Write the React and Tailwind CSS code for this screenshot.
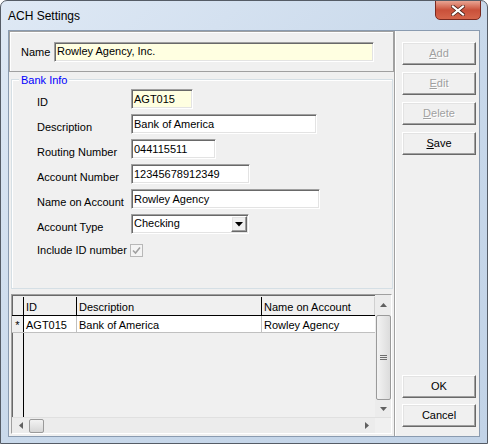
import React from 'react';

const sunken =
  'border border-t-[#a0a0a0] border-l-[#a0a0a0] border-r-white border-b-white shadow-[inset_1px_1px_0_#696969,inset_-1px_-1px_0_#e3e3e3]';
const raised =
  'border border-t-white border-l-white border-r-[#696969] border-b-[#696969] shadow-[inset_-1px_-1px_0_#a0a0a0,inset_1px_1px_0_#e3e3e3]';

function Field({ width, value, yellow }) {
  return (
    <div
      className={`${sunken} h-[20px] shrink-0 ${width} ${yellow ? 'bg-[#ffffe1]' : 'bg-white'} flex items-center pl-[2px] text-[11px] leading-none text-black`}
    >
      {value}
    </div>
  );
}

function Row({ label, children }) {
  return (
    <div className="flex items-center h-[20px]">
      <div className="w-[119px] shrink-0 pl-[25px] pt-[6px] text-[11px] text-black whitespace-nowrap">{label}</div>
      {children}
    </div>
  );
}

function Btn({ children, disabled }) {
  return (
    <div
      className={`${raised} bg-[#f0f0f0] h-[23px] w-[74px] flex items-center justify-center text-[11px] ${
        disabled ? 'text-[#a0a0a0] [text-shadow:1px_1px_0_#fff]' : 'text-black'
      }`}
    >
      {children}
    </div>
  );
}

export default function App() {
  return (
    <div
      className="relative w-[488px] h-[444px] overflow-hidden rounded-t-[7px] border border-[#555c66] bg-gradient-to-br from-[#dfe9f5] via-[#c9d9eb] to-[#c2d3e7]"
      style={{ fontFamily: '"Liberation Sans", Arial, sans-serif' }}
    >
      {/* title bar */}
      <div className="h-[29px] flex items-center pl-[7px] text-[12px] text-black">ACH Settings</div>
      <div className="absolute top-[-1px] right-[6px] w-[46px] h-[20px] rounded-b-[5px] border border-[#7a2a20] bg-gradient-to-b from-[#e8a493] via-[#c9503a] to-[#d5654b] flex items-center justify-center">
        <svg width="14" height="11" viewBox="0 0 14 11">
          <path d="M2 1.5 L12 9.5 M12 1.5 L2 9.5" stroke="#4a2018" strokeWidth="3.6" strokeLinecap="square" />
          <path d="M2 1.5 L12 9.5 M12 1.5 L2 9.5" stroke="#ffffff" strokeWidth="2.2" strokeLinecap="square" />
        </svg>
      </div>

      {/* client */}
      <div className="mx-[7px] h-[407px] border border-[#8a9bb0] bg-[#f0f0f0] flex">
        {/* left pane */}
        <div className="w-[385px] flex flex-col">
          <div className="h-[41px] border border-[#a0a0a0] shadow-[inset_1px_1px_0_#fff] flex items-center">
            <div className="pl-[11px] w-[44px] shrink-0 pt-[2px] text-[11px]">Name</div>
            <Field width="w-[320px]" value="Rowley Agency, Inc." yellow />
          </div>

          {/* Bank Info group */}
          <div className="relative mt-[7px] ml-[2px] mr-[1px] h-[210px] border border-[#d5dfe5] shadow-[inset_1px_1px_0_#fff]">
            <div className="absolute -top-[8px] left-[7px] px-[2px] bg-[#f0f0f0] text-[11px] text-[#0000ff]">Bank Info</div>
            <div className="flex flex-col gap-[5px] pt-[9px]">
              <Row label="ID">
                <Field width="w-[62px]" value="AGT015" yellow />
              </Row>
              <Row label="Description">
                <Field width="w-[186px]" value="Bank of America" />
              </Row>
              <Row label="Routing Number">
                <Field width="w-[85px]" value="044115511" />
              </Row>
              <Row label="Account Number">
                <Field width="w-[119px]" value="12345678912349" />
              </Row>
              <Row label="Name on Account">
                <Field width="w-[189px]" value="Rowley Agency" />
              </Row>
              <Row label="Account Type">
                <div className={`${sunken} h-[20px] w-[118px] shrink-0 bg-white flex items-center text-[11px]`}>
                  <div className="flex-1 pl-[2px] pb-[2px]">Checking</div>
                  <div className={`${raised} bg-[#f0f0f0] w-[16px] h-[16px] mr-[1px] flex items-center justify-center`}>
                    <svg width="8" height="5" viewBox="0 0 8 5">
                      <path d="M0 0 H8 L4 4.5 Z" fill="#000" />
                    </svg>
                  </div>
                </div>
              </Row>
              <div className="flex items-center h-[20px] mt-[1px]">
                <div className="w-[118px] shrink-0 pl-[25px] text-[11px] whitespace-nowrap">Include ID number</div>
                <div className="w-[13px] h-[13px] border border-[#b8b8b8] bg-[#f4f4f4] flex items-center justify-center">
                  <svg width="9" height="9" viewBox="0 0 9 9">
                    <path d="M1 4.5 L3.5 7 L8 1.5" stroke="#a0a0a0" strokeWidth="1.6" fill="none" />
                  </svg>
                </div>
              </div>
            </div>
          </div>

          {/* grid */}
          <div className={`mt-[5px] ml-[2px] mr-[2px] h-[140px] ${sunken} flex flex-col text-[11px]`}>
            <div className="flex flex-1 min-h-0">
              <div className="flex-1 flex flex-col pt-[2px]">
                <div className="flex h-[19px] border-b border-black">
                  <div className="w-[12px] border-r border-black"></div>
                  <div className="w-[53px] border-r border-black pl-[2px] pt-[2px]">ID</div>
                  <div className="w-[185px] border-r border-black pl-[2px] pt-[2px]">Description</div>
                  <div className="flex-1 pl-[2px] pt-[2px] border-r border-[#d0d0d0]">Name on Account</div>
                </div>
                <div className="flex h-[17px] bg-white border-b border-[#c0c0c0]">
                  <div className="w-[12px] border-r border-black bg-[#f0f0f0] flex items-center justify-center text-[11px] pt-[3px]">*</div>
                  <div className="w-[53px] border-r border-[#c0c0c0] pl-[2px] pt-[1px]">AGT015</div>
                  <div className="w-[185px] border-r border-[#c0c0c0] pl-[2px] pt-[1px]">Bank of America</div>
                  <div className="flex-1 pl-[2px] pt-[1px]">Rowley Agency</div>
                </div>
                <div className="w-[12px] flex-1 border-r border-black"></div>
              </div>
              {/* vertical scrollbar */}
              <div className="w-[16px] bg-[#ececec] flex flex-col items-center">
                <div className="h-[19px] flex items-center justify-center">
                  <svg width="7" height="4" viewBox="0 0 7 4"><path d="M0 4 L3.5 0 L7 4 Z" fill="#606060" /></svg>
                </div>
                <div className="w-[15px] flex-1 my-[1px] rounded-[2px] border border-[#9a9a9a] bg-gradient-to-r from-[#f3f3f3] to-[#dcdcdc] flex items-center justify-center">
                  <svg width="7" height="6" viewBox="0 0 7 6">
                    <path d="M0 0.5 H7 M0 2.5 H7 M0 4.5 H7" stroke="#6d6d6d" strokeWidth="1" />
                  </svg>
                </div>
                <div className="h-[16px] flex items-center justify-center">
                  <svg width="7" height="4" viewBox="0 0 7 4"><path d="M0 0 L3.5 4 L7 0 Z" fill="#606060" /></svg>
                </div>
              </div>
            </div>
            {/* horizontal scrollbar */}
            <div className="h-[16px] flex bg-[#ececec] border-t border-[#e0e0e0]">
              <div className="flex-1 flex items-center">
                <div className="w-[17px] flex items-center justify-center">
                  <svg width="4" height="7" viewBox="0 0 4 7"><path d="M4 0 L0 3.5 L4 7 Z" fill="#606060" /></svg>
                </div>
                <div className="w-[15px] h-[14px] rounded-[2px] border border-[#9a9a9a] bg-gradient-to-b from-[#f3f3f3] to-[#d6d6d6]"></div>
                <div className="flex-1"></div>
                <div className="w-[16px] flex items-center justify-center">
                  <svg width="4" height="7" viewBox="0 0 4 7"><path d="M0 0 L4 3.5 L0 7 Z" fill="#606060" /></svg>
                </div>
              </div>
              <div className="w-[16px] bg-[#f0f0f0]"></div>
            </div>
          </div>
        </div>

        {/* right pane */}
        <div className="flex-1 border-l border-[#a0a0a0] shadow-[inset_1px_0_0_#fff] flex flex-col pl-[7px] pt-[11px] pb-[9px]">
          <div className="flex flex-col gap-[7px]">
            <Btn disabled><span className="underline">A</span>dd</Btn>
            <Btn disabled><span className="underline">E</span>dit</Btn>
            <Btn disabled><span className="underline">D</span>elete</Btn>
            <Btn><span className="underline">S</span>ave</Btn>
          </div>
          <div className="flex-1"></div>
          <div className="flex flex-col gap-[6px]">
            <Btn>OK</Btn>
            <Btn>Cancel</Btn>
          </div>
        </div>
      </div>
    </div>
  );
}
